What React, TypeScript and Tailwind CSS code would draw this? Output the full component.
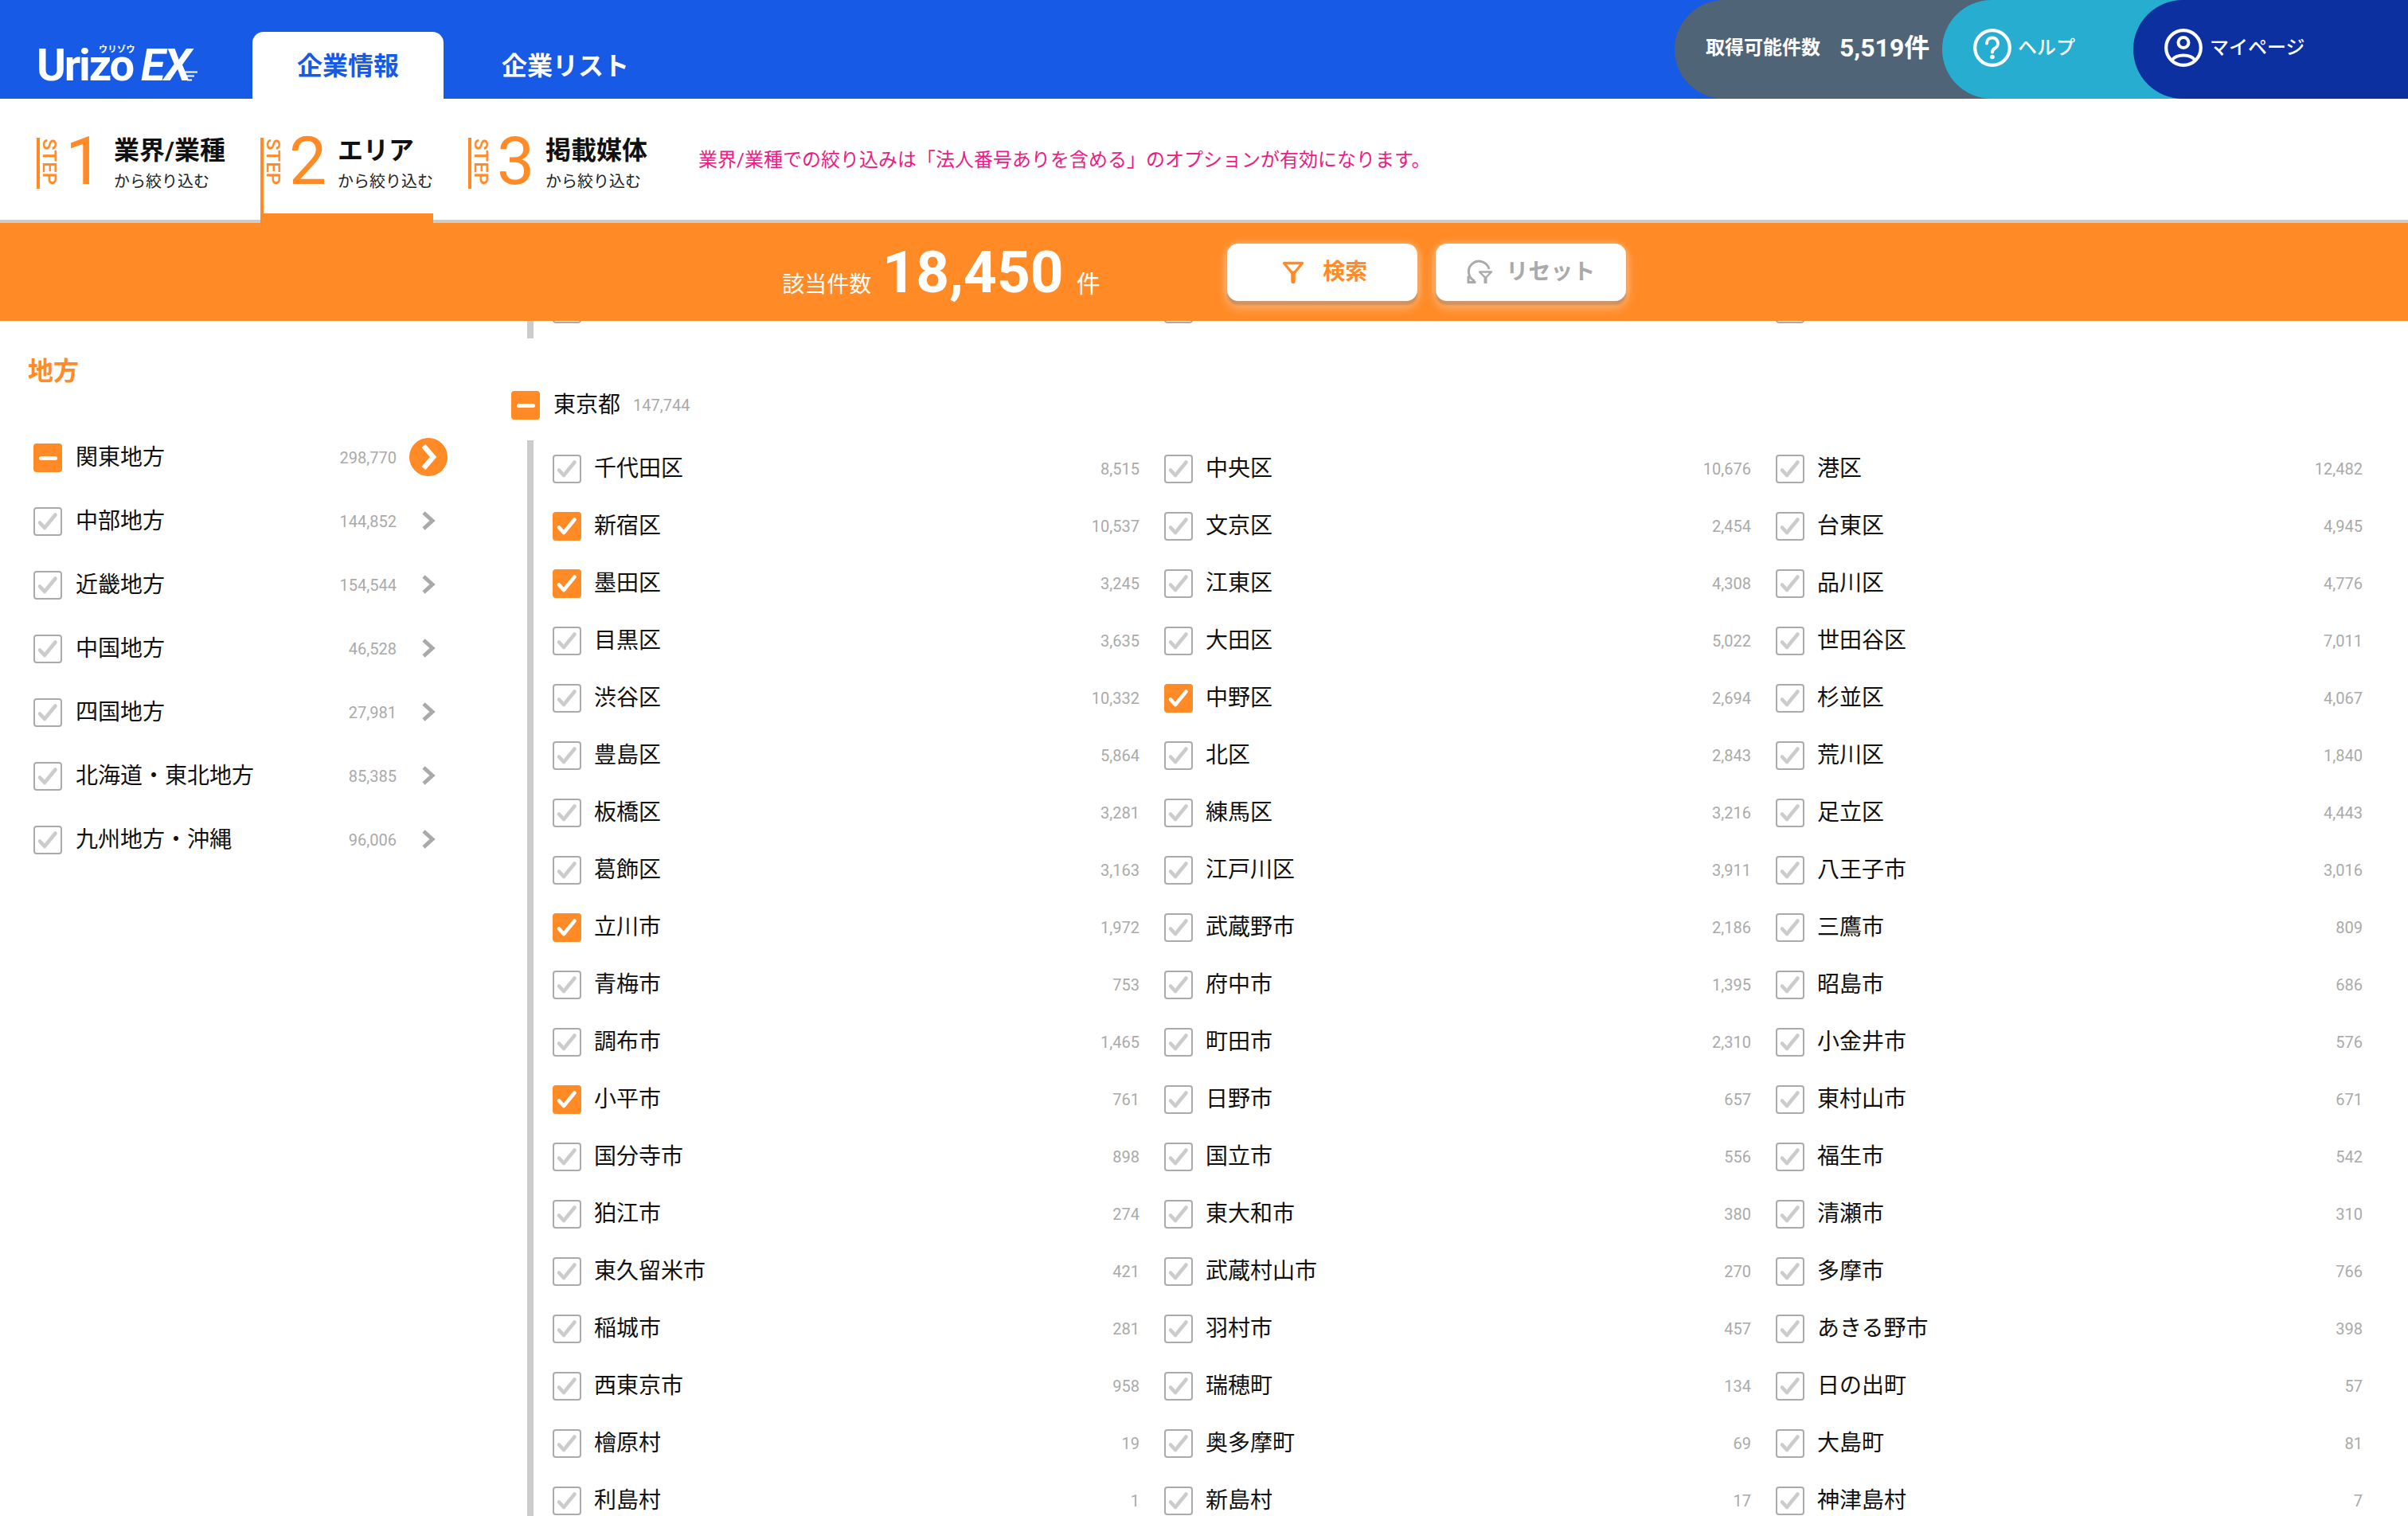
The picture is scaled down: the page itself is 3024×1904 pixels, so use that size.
import React from "react";

const regions: [string, string, boolean?][] = [
  ["関東地方", "298,770", true],
  ["中部地方", "144,852"],
  ["近畿地方", "154,544"],
  ["中国地方", "46,528"],
  ["四国地方", "27,981"],
  ["北海道・東北地方", "85,385"],
  ["九州地方・沖縄", "96,006"],
];

const wards: [string, string, boolean?][] = [
  ["千代田区", "8,515"], ["中央区", "10,676"], ["港区", "12,482"],
  ["新宿区", "10,537", true], ["文京区", "2,454"], ["台東区", "4,945"],
  ["墨田区", "3,245", true], ["江東区", "4,308"], ["品川区", "4,776"],
  ["目黒区", "3,635"], ["大田区", "5,022"], ["世田谷区", "7,011"],
  ["渋谷区", "10,332"], ["中野区", "2,694", true], ["杉並区", "4,067"],
  ["豊島区", "5,864"], ["北区", "2,843"], ["荒川区", "1,840"],
  ["板橋区", "3,281"], ["練馬区", "3,216"], ["足立区", "4,443"],
  ["葛飾区", "3,163"], ["江戸川区", "3,911"], ["八王子市", "3,016"],
  ["立川市", "1,972", true], ["武蔵野市", "2,186"], ["三鷹市", "809"],
  ["青梅市", "753"], ["府中市", "1,395"], ["昭島市", "686"],
  ["調布市", "1,465"], ["町田市", "2,310"], ["小金井市", "576"],
  ["小平市", "761", true], ["日野市", "657"], ["東村山市", "671"],
  ["国分寺市", "898"], ["国立市", "556"], ["福生市", "542"],
  ["狛江市", "274"], ["東大和市", "380"], ["清瀬市", "310"],
  ["東久留米市", "421"], ["武蔵村山市", "270"], ["多摩市", "766"],
  ["稲城市", "281"], ["羽村市", "457"], ["あきる野市", "398"],
  ["西東京市", "958"], ["瑞穂町", "134"], ["日の出町", "57"],
  ["檜原村", "19"], ["奥多摩町", "69"], ["大島町", "81"],
  ["利島村", "1"], ["新島村", "17"], ["神津島村", "7"],
];

function Box({ state }: { state: "off" | "on" | "some" }) {
  if (state === "some") {
    return (
      <span className="flex h-[36px] w-[36px] shrink-0 items-center justify-center rounded-[4px] bg-[#ff8a26]">
        <span className="h-[5px] w-[23px] rounded-full bg-white" />
      </span>
    );
  }
  const on = state === "on";
  return (
    <span className={"flex h-[36px] w-[36px] shrink-0 items-center justify-center rounded-[4px] " + (on ? "bg-[#ff8a26]" : "border-2 border-[#aaaaaa] bg-white")}>
      <svg viewBox="0 0 36 36" className="h-[36px] w-[36px] shrink-0">
        <path d="M8 19.5 L14 26 L27.5 9.5" fill="none" stroke={on ? "#ffffff" : "#cccccc"} strokeWidth="4.6" strokeLinecap="round" strokeLinejoin="round" />
      </svg>
    </span>
  );
}

function Step({ n, title, active, w }: { n: string; title: string; active?: boolean; w: string }) {
  return (
    <div className={"mt-[49px] flex h-[107px] items-start " + w + (active ? " -mb-[4px] border-b-[12px] border-l-4 border-[#ff8a26]" : "")}>
      {!active && <span className="h-[64px] w-[4px] shrink-0 bg-[#ff8a26]" />}
      <span className="ml-[3px] mt-[1px] w-[17px] text-[24px] font-medium leading-[17px] text-[#ff8a26] [writing-mode:vertical-rl]">STEP</span>
      <span className="ml-[12px] w-[47px] text-[84px] font-normal leading-[60px] text-[#ff8a26]">{n}</span>
      <div className="ml-[14px] whitespace-nowrap">
        <div className="-mt-[2px] text-[32px] font-bold leading-[36px] text-[#111111]">{title}</div>
        <div className="mt-[7px] text-[20px] leading-[28px] text-[#222222]">から絞り込む</div>
      </div>
    </div>
  );
}

export default function App() {
  return (
    <div className="flex h-[1904px] w-[3024px] flex-col overflow-hidden bg-white font-['Roboto','Noto_Sans_CJK_JP',sans-serif] text-[#111111]">
      {/* header */}
      <header className="flex h-[124px] shrink-0 bg-[#175ae6] text-white">
        <div className="relative w-[317px] shrink-0 pl-[46px]">
          <div className="mt-[47px] flex items-baseline">
            <span className="text-[56px] font-bold leading-[70px] tracking-[-2.2px]">Urizo</span>
            <span className="ml-[10px] text-[56px] font-bold italic leading-[70px] tracking-[-1.5px]">EX</span>
          </div>
          <span className="absolute left-[124px] top-[57px] text-[11px] font-bold leading-[12px] tracking-[0.5px]">ウリゾウ</span>
          <svg viewBox="0 0 22 16" className="absolute left-[227px] top-[88px] h-[16px] w-[22px]">
            <path d="M0 2.5 H21 M4 7.5 H17 M8 12.5 H14" stroke="#ffffff" strokeWidth="2" />
          </svg>
        </div>
        <div className="mt-[40px] flex h-[84px] w-[240px] shrink-0 items-center justify-center rounded-t-[14px] bg-white pt-[2px] text-[32px] font-bold text-[#175ae6]">企業情報</div>
        <div className="ml-[73px] mt-[40px] flex h-[84px] items-center pt-[2px] text-[32px] font-bold">企業リスト</div>
        <div className="ml-auto flex">
          <div className="flex h-[124px] w-[398px] items-center rounded-l-[62px] bg-[#506478] pb-[4px] pl-[39px] font-bold">
            <span className="text-[24px]">取得可能件数</span>
            <span className="ml-[24px] text-[32px]">5,519件</span>
          </div>
          <div className="-ml-[62px] flex h-[124px] w-[302px] items-center rounded-l-[62px] bg-[#27adcf] pb-[4px] pl-[39px]">
            <svg viewBox="0 0 48 48" className="h-[48px] w-[48px] shrink-0">
              <circle cx="24" cy="24" r="21.8" fill="none" stroke="#fff" strokeWidth="4.2" />
              <path d="M17 18.5a7 7 0 1 1 10.5 6c-2.3 1.3-3.5 2.5-3.5 5" fill="none" stroke="#fff" strokeWidth="4" strokeLinecap="round" />
              <circle cx="24" cy="35.5" r="2.8" fill="#fff" />
            </svg>
            <span className="ml-[8px] text-[24px] font-medium">ヘルプ</span>
          </div>
          <div className="-ml-[62px] flex h-[124px] w-[345px] items-center rounded-l-[62px] bg-[#0c30a0] pb-[4px] pl-[39px]">
            <svg viewBox="0 0 48 48" className="h-[48px] w-[48px] shrink-0">
              <circle cx="24" cy="24" r="21.8" fill="none" stroke="#fff" strokeWidth="4.2" />
              <circle cx="24" cy="17.5" r="6.5" fill="none" stroke="#fff" strokeWidth="4" />
              <path d="M10 39 C15 31.5 33 31.5 38 39" fill="none" stroke="#fff" strokeWidth="4" />
            </svg>
            <span className="ml-[9px] text-[24px] font-medium">マイページ</span>
          </div>
        </div>
      </header>

      {/* steps */}
      <div className="flex h-[156px] shrink-0 border-b-4 border-[#cccccc] pl-[46px]">
        <Step n="1" title="業界/業種" w="w-[281px]" />
        <Step n="2" title="エリア" active w="w-[217px]" />
        <div className="w-[44px] shrink-0" />
        <Step n="3" title="掲載媒体" w="w-[289px]" />
        <div className="flex h-[152px] items-center pt-[2px] text-[24px] whitespace-nowrap text-[#f01a84]">業界/業種での絞り込みは「法人番号ありを含める」のオプションが有効になります。</div>
      </div>

      {/* orange bar */}
      <div className="flex h-[123px] shrink-0 items-center justify-center bg-[#ff8a26]">
        <div className="flex items-baseline text-white">
          <span className="text-[28px]">該当件数</span>
          <span className="ml-[14px] text-[73px] font-bold leading-[84px]">18,450</span>
          <span className="ml-[16px] text-[30px]">件</span>
        </div>
        <button className="ml-[159px] flex h-[72px] w-[239px] items-center justify-center rounded-[14px] bg-white pl-[7px] text-[28px] font-bold text-[#ff8a26] shadow-[0_5px_3px_rgba(0,0,0,0.2),0_8px_14px_rgba(255,255,255,0.4),0_0_10px_rgba(255,255,255,0.4)]">
          <svg viewBox="0 0 28 28" className="mr-[23px] h-[28px] w-[28px]">
            <path d="M2.5 2.5 H25.5 L14 16.5 Z" fill="none" stroke="#ff8a26" strokeWidth="3.4" strokeLinejoin="round" />
            <path d="M14 15 V25.5" stroke="#ff8a26" strokeWidth="5.5" strokeLinecap="round" />
          </svg>
          検索
        </button>
        <button className="ml-[23px] flex h-[72px] w-[239px] items-center justify-center rounded-[14px] bg-white text-[28px] font-bold text-[#aaaaaa] shadow-[0_5px_3px_rgba(0,0,0,0.2),0_8px_14px_rgba(255,255,255,0.4),0_0_10px_rgba(255,255,255,0.4)]">
          <svg viewBox="0 0 34 34" className="mr-[16px] h-[34px] w-[34px]">
            <path d="M29 13 A13 13 0 1 0 11 28" fill="none" stroke="#aaaaaa" strokeWidth="3" />
            <path d="M3 21.5 V29.5 H12.5" fill="none" stroke="#aaaaaa" strokeWidth="3" />
            <path d="M17 16.5 H32 L24.5 24 Z" fill="#ffffff" stroke="#aaaaaa" strokeWidth="2.4" strokeLinejoin="round" />
            <path d="M24.5 23 V31" stroke="#aaaaaa" strokeWidth="4" />
          </svg>
          リセット
        </button>
      </div>

      {/* main */}
      <main className="flex min-h-0 flex-1">
        <aside className="w-[662px] shrink-0 pl-[35px]">
          <h2 className="mb-[49px] mt-[43px] h-[40px] text-[32px] font-bold leading-[40px] text-[#ff8a26]">地方</h2>
          {regions.map(([name, count, active]) => (
            <div key={name} className="ml-[7px] flex h-[80px] w-[520px] items-center">
              <Box state={active ? "some" : "off"} />
              <span className="ml-[17px] text-[28px] whitespace-nowrap">{name}</span>
              <span className="ml-auto text-[20px] text-[#aaaaaa]">{count}</span>
              <span className="ml-[16px] flex h-[48px] w-[48px] items-center justify-center">
                {active ? (
                  <span className="flex h-[48px] w-[48px] -translate-y-[1px] items-center justify-center rounded-full bg-[#ff8a26]">
                    <svg viewBox="0 0 24 36" className="h-[36px] w-[24px]">
                      <path d="M6 4 L18 18 L6 32" fill="none" stroke="#fff" strokeWidth="6.5" />
                    </svg>
                  </span>
                ) : (
                  <svg viewBox="0 0 18 24" className="h-[24px] w-[18px] -translate-y-[1px]">
                    <path d="M3 2 L14 12 L3 22" fill="none" stroke="#aaaaaa" strokeWidth="5" />
                  </svg>
                )}
              </span>
            </div>
          ))}
        </aside>

        <section className="min-w-0 flex-1">
          <div className="grid h-[22px] w-[2305px] grid-cols-[repeat(3,737px)] gap-x-[31px] overflow-hidden border-l-8 border-[#cccccc] pl-[24px]">
            <div className="-mt-[33px]"><Box state="off" /></div>
            <div className="-mt-[33px]"><Box state="off" /></div>
            <div className="-mt-[33px]"><Box state="off" /></div>
          </div>
          <div className="-ml-[20px] flex h-[128px] items-start pt-[66px]">
            <Box state="some" />
            <span className="ml-[17px] text-[28px] leading-[36px]">東京都</span>
            <span className="ml-[16px] text-[20px] leading-[36px] text-[#aaaaaa]">147,744</span>
          </div>
          <div className="grid grid-cols-[repeat(3,737px)] gap-x-[31px] border-l-8 border-[#cccccc] pl-[24px]">
            {wards.map(([name, count, on]) => (
              <div key={name} className="flex h-[72px] items-center">
                <Box state={on ? "on" : "off"} />
                <span className="ml-[16px] text-[28px] whitespace-nowrap">{name}</span>
                <span className="ml-auto text-[20px] text-[#aaaaaa]">{count}</span>
              </div>
            ))}
          </div>
        </section>
      </main>
    </div>
  );
}
